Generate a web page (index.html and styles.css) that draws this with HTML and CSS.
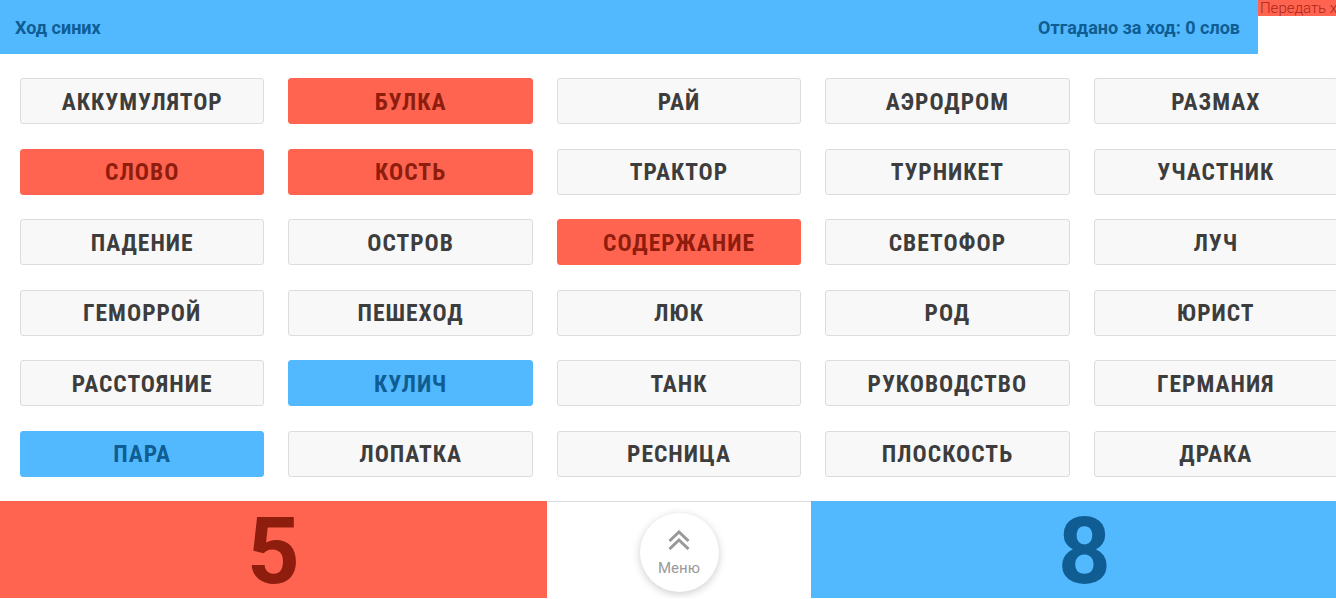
FILE: index.html
```html
<!DOCTYPE html>
<html lang="ru">

<head>
  <meta charset="UTF-8" />
  <meta name="viewport" content="width=device-width, initial-scale=1.0" />
  <title>Кодовые имена</title>
  <link rel="stylesheet" href="styles.css">
</head>

<body>
  <div class="pagina">
    <header class="cabecera">
      <div class="turno">
        <span>Ход синих</span>
        <span>Отгадано за ход: 0 слов</span>
      </div>
      <button class="pasar">Передать ход</button>
    </header>

    <main class="tablero">
      <div class="carta">Аккумулятор</div>
      <div class="carta roja">Булка</div>
      <div class="carta">Рай</div>
      <div class="carta">Аэродром</div>
      <div class="carta">Размах</div>

      <div class="carta roja">Слово</div>
      <div class="carta roja">Кость</div>
      <div class="carta">Трактор</div>
      <div class="carta">Турникет</div>
      <div class="carta">Участник</div>

      <div class="carta">Падение</div>
      <div class="carta">Остров</div>
      <div class="carta roja">Содержание</div>
      <div class="carta">Светофор</div>
      <div class="carta">Луч</div>

      <div class="carta">Геморрой</div>
      <div class="carta">Пешеход</div>
      <div class="carta">Люк</div>
      <div class="carta">Род</div>
      <div class="carta">Юрист</div>

      <div class="carta">Расстояние</div>
      <div class="carta azul">Кулич</div>
      <div class="carta">Танк</div>
      <div class="carta">Руководство</div>
      <div class="carta">Германия</div>

      <div class="carta azul">Пара</div>
      <div class="carta">Лопатка</div>
      <div class="carta">Ресница</div>
      <div class="carta">Плоскость</div>
      <div class="carta">Драка</div>
    </main>

    <footer class="marcador">
      <div class="puntos rojo">5</div>
      <div class="centro">
        <button class="menu">
          <svg width="22" height="20" viewBox="0 0 22 20">
            <polyline points="1.5,11 11,2 20.5,11" fill="none" stroke="#999" stroke-width="3" />
            <polyline points="1.5,19 11,10 20.5,19" fill="none" stroke="#999" stroke-width="3" />
          </svg>
          <span>Меню</span>
        </button>
      </div>
      <div class="puntos azul">8</div>
    </footer>
  </div>
</body>

</html>
```

FILE: styles.css
```css
html, body {
  overflow: hidden;
}

body {
  margin: 0;
  font-family: Roboto, "Liberation Sans", sans-serif;
  background: #fff;
}

.pagina {
  width: 1358px;
}

.cabecera {
  display: flex;
  align-items: flex-start;
}

.turno {
  flex: 1;
  display: flex;
  justify-content: space-between;
  align-items: center;
  height: 54px;
  padding: 0 18px 0 15px;
  background-color: #52b9ff;
  font-size: 18px;
  font-weight: 700;
  color: #0f5d93;
}

.pasar {
  width: 100px;
  height: 16px;
  padding: 0 0 0 2px;
  border: none;
  background-color: #ff6450;
  color: #a8261a;
  font-family: Roboto, sans-serif;
  font-size: 15px;
  font-weight: 300;
  text-align: left;
  line-height: 16px;
  white-space: nowrap;
  overflow: hidden;
}

.tablero {
  display: grid;
  grid-template-columns: repeat(5, 1fr);
  column-gap: 24px;
  row-gap: 24.5px;
  padding: 24px 20px;
}

.carta {
  display: flex;
  align-items: center;
  justify-content: center;
  padding-top: 1px;
  box-sizing: border-box;
  height: 46px;
  border: 1px solid #dcdcdc;
  border-radius: 3px;
  background-color: #f8f8f8;
  color: #3d3d3d;
  font-size: 23.5px;
  font-weight: 700;
  font-stretch: condensed;
  letter-spacing: 1px;
  text-transform: uppercase;
}

.carta.roja {
  background-color: #ff6450;
  border-color: #ff6450;
  color: #8e1d0e;
}

.carta.azul {
  background-color: #52b9ff;
  border-color: #52b9ff;
  color: #0f5d93;
}

.marcador {
  display: flex;
  height: 97px;
}

.puntos {
  width: 547px;
  display: flex;
  align-items: center;
  justify-content: center;
  padding-top: 4px;
  font-size: 92px;
  font-weight: 700;
}

.puntos.rojo {
  background-color: #ff6450;
  color: #8e1d0e;
}

.puntos.azul {
  background-color: #52b9ff;
  color: #0f5d93;
}

.centro {
  flex: 1;
  display: flex;
  justify-content: center;
  padding-top: 11px;
  border-top: 1px solid #dcdcdc;
}

.menu {
  width: 79px;
  height: 79px;
  border-radius: 50%;
  border: none;
  background: #fff;
  box-shadow: 0 2px 8px rgba(0, 0, 0, 0.2);
  display: flex;
  flex-direction: column;
  align-items: center;
  gap: 9px;
  padding: 17px 0 0;
  font-family: Roboto, sans-serif;
  font-size: 15px;
  color: #999;
}
```
